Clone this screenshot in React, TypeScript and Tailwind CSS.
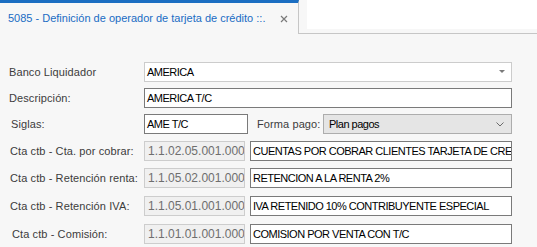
import React from "react";

const labelCls = "text-[11px] tracking-[0.1px] text-[#3c3c3c] leading-none whitespace-nowrap";
const inputTxt = "text-[11px] tracking-[-0.5px] text-black leading-none whitespace-nowrap overflow-hidden";

function TextBox({ value, w }: { value: string; w: string }) {
  return (
    <div className={`${w} h-[20px] shrink-0 bg-white border border-[#7a7a7a] flex items-center pl-[2px] ${inputTxt}`}>
      {value}
    </div>
  );
}

function CodeBox({ value }: { value: string }) {
  return (
    <div className="w-[101px] h-[20px] shrink-0 bg-[#f0f0f0] border border-[#cdcdcd] flex items-center pl-[3px] text-[12px] text-[#6e6e6e] leading-none whitespace-nowrap overflow-hidden">
      {value}
    </div>
  );
}

function CtaRow({ label, code, text, mt, lx }: { label: string; code: string; text: string; mt: string; lx: string }) {
  return (
    <div className={`flex items-center h-[20px] ${mt}`}>
      <div className="w-[136px] shrink-0 flex">
        <span className={`${labelCls} ${lx}`}>{label}</span>
      </div>
      <CodeBox value={code} />
      <div className="w-[5px] shrink-0" />
      <TextBox value={text} w="w-[262px]" />
    </div>
  );
}

export default function App() {
  return (
    <div
      className="w-[537px] h-[247px] overflow-hidden bg-[#f7f7f7] flex flex-col"
      style={{ fontFamily: '"Liberation Sans", Arial, sans-serif' }}
    >
      {/* header */}
      <div className="flex h-[34px] shrink-0">
        <div className="w-[299px] h-[34px] border-t-[3px] border-t-[#1b6ec2] border-r border-r-[#c6c6c6] flex items-center pl-[8px] pr-[10px]">
          <span className="text-[11px] text-[#1a6cc4] leading-none whitespace-nowrap">
            5085 - Definición de operador de tarjeta de crédito ::.
          </span>
          <div className="flex-1" />
          <svg width="8" height="8" viewBox="0 0 8 8" className="mt-[1px]">
            <path d="M1 1 L7 7 M7 1 L1 7" stroke="#7a7a7a" strokeWidth="1.2" />
          </svg>
        </div>
        <div className="flex-1 flex flex-col border-b border-b-[#c6c6c6]">
          <div className="h-[29px] ml-[8px] bg-white" />
        </div>
      </div>

      {/* form */}
      <div className="flex flex-col pl-[8px]">
        <div className="flex items-center h-[20px] mt-[28px]">
          <div className="w-[136px] shrink-0 flex">
            <span className={`${labelCls} ml-[1px]`}>Banco Liquidador</span>
          </div>
          <div className={`w-[368px] h-[20px] shrink-0 bg-white border border-[#cccccc] flex items-center pl-[2px] pr-[6px] ${inputTxt}`}>
            <span className="flex-1">AMERICA</span>
            <svg width="6" height="4" viewBox="0 0 6 4">
              <path d="M0 0 L6 0 L3 3 Z" fill="#7a7a7a" />
            </svg>
          </div>
        </div>

        <div className="flex items-center h-[20px] mt-[6px]">
          <div className="w-[136px] shrink-0 flex">
            <span className={`${labelCls} ml-[1px]`}>Descripción:</span>
          </div>
          <TextBox value="AMERICA T/C" w="w-[368px]" />
        </div>

        <div className="flex items-center h-[20px] mt-[6px]">
          <div className="w-[136px] shrink-0 flex">
            <span className={`${labelCls} ml-[3px]`}>Siglas:</span>
          </div>
          <TextBox value="AME T/C" w="w-[104px]" />
          <div className="w-[66px] shrink-0 ml-[9px] flex">
            <span className={labelCls}>Forma pago:</span>
          </div>
          <div className={`w-[189px] h-[20px] shrink-0 bg-[#e5e5e5] border border-[#adadad] flex items-center pl-[5px] pr-[7px] ${inputTxt}`}>
            <span className="flex-1">Plan pagos</span>
            <svg width="8" height="5" viewBox="0 0 8 5">
              <path d="M0.5 0.5 L4 4 L7.5 0.5" stroke="#6a6a6a" strokeWidth="1" fill="none" />
            </svg>
          </div>
        </div>

        <CtaRow mt="mt-[7px]" lx="ml-[2px]" label="Cta ctb - Cta. por cobrar:" code="1.1.02.05.001.0004" text="CUENTAS POR COBRAR CLIENTES TARJETA DE CREDITO" />
        <CtaRow mt="mt-[7px]" lx="ml-[2px]" label="Cta ctb - Retención renta:" code="1.1.05.02.001.0002" text="RETENCION A LA RENTA 2%" />
        <CtaRow mt="mt-[8px]" lx="ml-[2px]" label="Cta ctb - Retención IVA:" code="1.1.05.01.001.0001" text="IVA RETENIDO 10% CONTRIBUYENTE ESPECIAL" />
        <CtaRow mt="mt-[8px]" lx="ml-[4px]" label="Cta ctb - Comisión:" code="1.1.01.01.001.0001" text="COMISION POR VENTA CON T/C" />
      </div>
    </div>
  );
}
